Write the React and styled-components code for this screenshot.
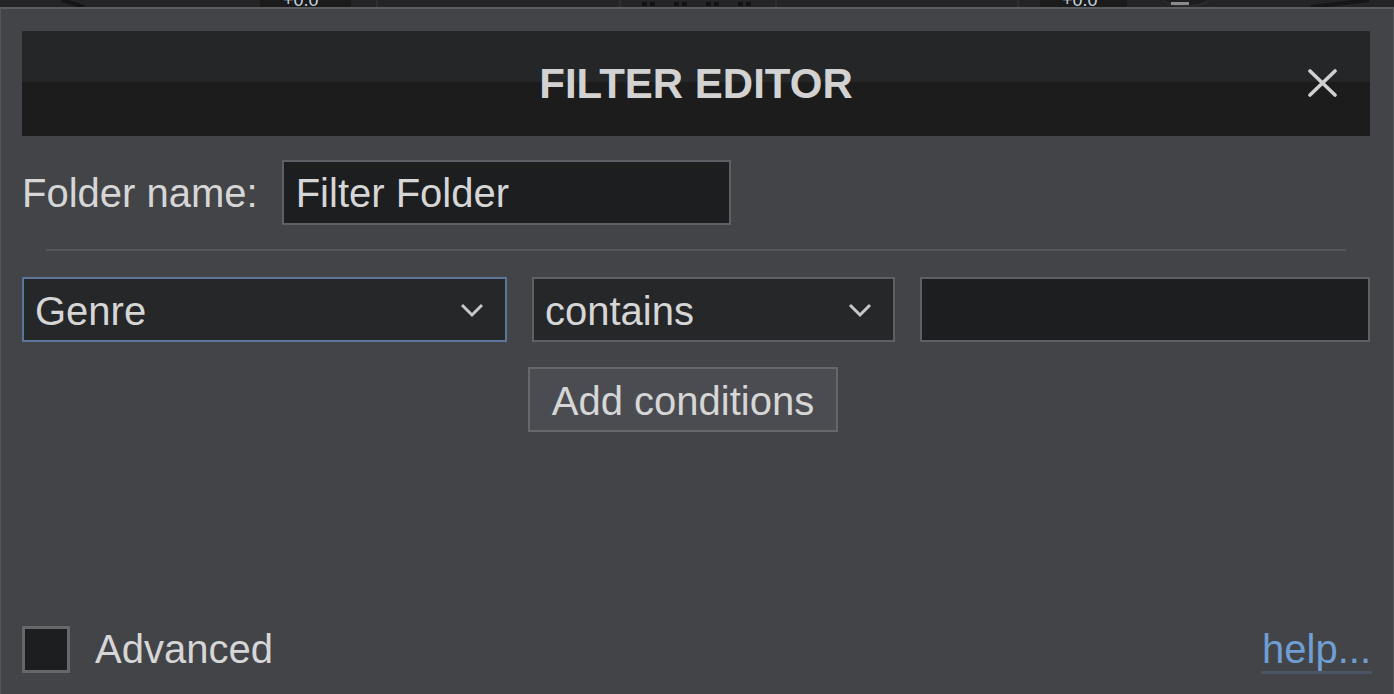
import React from 'react';
import styled, { createGlobalStyle } from 'styled-components';

const GlobalStyle = createGlobalStyle`
  html, body {
    margin: 0;
    padding: 0;
    background: #232325;
    overflow: hidden;
  }
  body {
    font-family: "Liberation Sans", Arial, sans-serif;
  }
`;

const Page = styled.div`
  height: 694px;
  display: flex;
  flex-direction: column;
`;

const BackStrip = styled.svg`
  display: block;
  width: 1394px;
  height: 7px;
  flex: none;
`;

const Dialog = styled.div`
  flex: 1;
  display: flex;
  flex-direction: column;
  background: #434448;
  border-top: 2px solid #5c5d61;
  border-left: 1px solid #55565a;
  border-right: 1px solid #55565a;
  padding: 22px 23px 21px 21px;
  color: #d6d6d6;
  font-size: 40px;
`;

const Header = styled.div`
  height: 105px;
  display: flex;
  align-items: center;
  justify-content: center;
  position: relative;
  background: linear-gradient(#252628 0, #252628 51px, #1c1c1d 51px, #1c1c1d 100%);
`;

const Title = styled.h1`
  margin: 0;
  font-size: 42px;
  font-weight: bold;
  color: #d2d2d2;
`;

const CloseButton = styled.button`
  position: absolute;
  right: 33px;
  top: 38px;
  width: 29px;
  height: 28px;
  padding: 0;
  border: 0;
  background: none;
  cursor: pointer;
  display: flex;
`;

const FolderRow = styled.div`
  display: flex;
  align-items: center;
  gap: 24px;
  margin-top: 24px;
`;

const Label = styled.span`
  line-height: 1;
`;

const TextBox = styled.div`
  box-sizing: border-box;
  height: 65px;
  width: ${p => (p.$width ? `${p.$width}px` : 'auto')};
  flex: ${p => (p.$grow ? 1 : 'none')};
  background: #1d1e20;
  border: 2px solid #5f6065;
  display: flex;
  align-items: center;
  padding-left: 12px;
  line-height: 1;
`;

const Separator = styled.div`
  height: 2px;
  background: #56575b;
  margin: 24px 24px 0;
`;

const ConditionRow = styled.div`
  display: flex;
  gap: 25px;
  margin-top: 26px;
`;

const Select = styled.div`
  box-sizing: border-box;
  height: 65px;
  width: ${p => p.$width}px;
  flex: none;
  background: #262729;
  border: 2px solid ${p => (p.$focused ? '#5b7698' : '#5f6065')};
  display: flex;
  align-items: center;
  justify-content: space-between;
  padding: 2px 21px 0 11px;
  line-height: 1;
`;

const ButtonRow = styled.div`
  display: flex;
  margin-top: 25px;
  padding-left: 506px;
`;

const Button = styled.button`
  box-sizing: border-box;
  width: 310px;
  height: 65px;
  background: #4b4c51;
  border: 2px solid #66676b;
  color: #d6d6d6;
  font-family: inherit;
  font-size: 40px;
  padding: 2px 0 0;
  line-height: 1;
`;

const Footer = styled.div`
  margin-top: auto;
  display: flex;
  align-items: center;
  justify-content: space-between;
`;

const CheckLabel = styled.label`
  display: flex;
  align-items: center;
  gap: 25px;
`;

const Checkbox = styled.span`
  box-sizing: border-box;
  width: 48px;
  height: 47px;
  background: #1d1e20;
  border: 3px solid #66676b;
`;

const HelpLink = styled.a`
  color: #6f9ed3;
  text-decoration: none;
  border-bottom: 3px solid #4a5565;
  line-height: 1;
  padding: 0 1px 2px;
  margin-right: -2px;
  margin-bottom: -4px;
`;

const Chevron = () => (
  <svg width="24" height="15" viewBox="0 0 24 15">
    <polyline points="2,2 12,12 22,2" fill="none" stroke="#c8c8c8" strokeWidth="3" />
  </svg>
);

const CloseIcon = () => (
  <svg width="29" height="28" viewBox="0 0 29 28">
    <path d="M2 2 L27 26 M27 2 L2 26" stroke="#d0d0d0" strokeWidth="3.6" strokeLinecap="round" />
  </svg>
);

const App = () => (
  <>
    <GlobalStyle />
    <Page>
      <BackStrip viewBox="0 0 1394 7">
        <rect width="1394" height="7" fill="#242426" />
        <line x1="62" y1="0" x2="84" y2="7" stroke="#151516" strokeWidth="4" />
        <rect x="260" y="0" width="91" height="7" fill="#1b1b1c" />
        <text x="283" y="6" fontSize="18" fill="#c7d3df" fontFamily="Liberation Sans, Arial, sans-serif">+0.0</text>
        <line x1="377" y1="0" x2="377" y2="7" stroke="#38383b" strokeWidth="1" />
        <line x1="620" y1="0" x2="620" y2="7" stroke="#38383b" strokeWidth="1" />
        {[642, 650, 674, 682, 706, 714, 738, 746].map(x => (
          <rect key={x} x={x} y="2" width="5" height="4" fill="#121213" />
        ))}
        <line x1="776" y1="0" x2="776" y2="7" stroke="#38383b" strokeWidth="1" />
        <line x1="1018" y1="0" x2="1018" y2="7" stroke="#38383b" strokeWidth="1" />
        <rect x="1040" y="0" width="87" height="7" fill="#1b1b1c" />
        <text x="1062" y="6" fontSize="18" fill="#c7d3df" fontFamily="Liberation Sans, Arial, sans-serif">+0.0</text>
        <ellipse cx="1186" cy="-6" rx="27" ry="12" fill="#1e1e20" stroke="#333336" />
        <rect x="1171" y="2" width="18" height="3" fill="#8a8a8d" />
        <line x1="1311" y1="7" x2="1369" y2="0" stroke="#151516" strokeWidth="4" />
      </BackStrip>
      <Dialog>
        <Header>
          <Title>FILTER EDITOR</Title>
          <CloseButton aria-label="Close">
            <CloseIcon />
          </CloseButton>
        </Header>

        <FolderRow>
          <Label>Folder name:</Label>
          <TextBox $width={449}>Filter Folder</TextBox>
        </FolderRow>

        <Separator />

        <ConditionRow>
          <Select $width={485} $focused>
            <span>Genre</span>
            <Chevron />
          </Select>
          <Select $width={363}>
            <span>contains</span>
            <Chevron />
          </Select>
          <TextBox $grow />
        </ConditionRow>

        <ButtonRow>
          <Button>Add conditions</Button>
        </ButtonRow>

        <Footer>
          <CheckLabel>
            <Checkbox />
            <span>Advanced</span>
          </CheckLabel>
          <HelpLink href="#">help...</HelpLink>
        </Footer>
      </Dialog>
    </Page>
  </>
);

export default App;
